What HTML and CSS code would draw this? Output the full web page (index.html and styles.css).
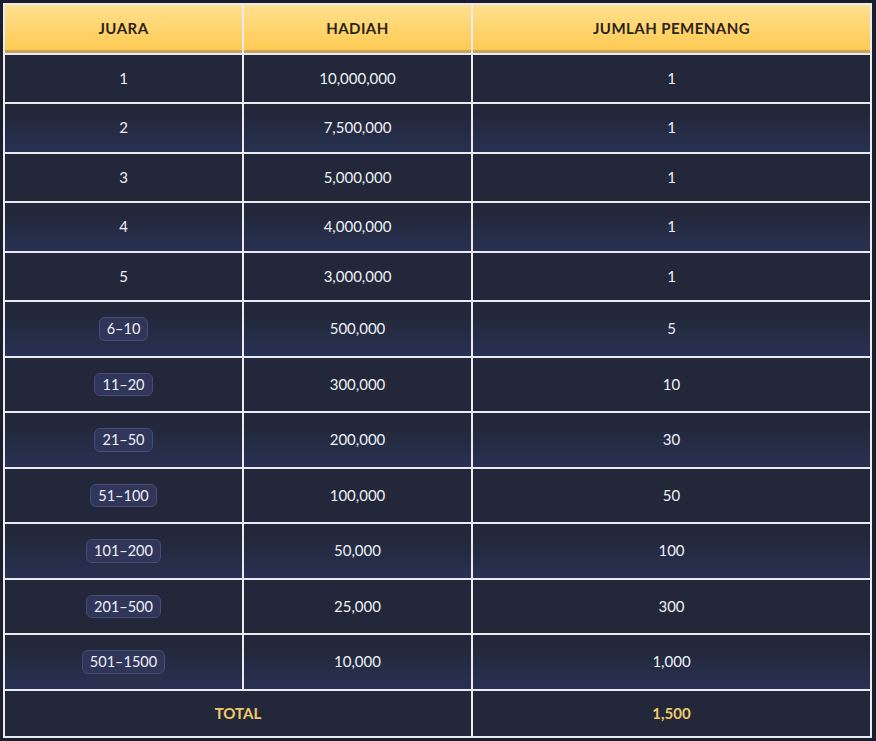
FILE: index.html
```html
<!DOCTYPE html>
<html lang="id">
<head>
    <meta charset="UTF-8">
    <meta name="viewport" content="width=device-width, initial-scale=1.0">
    <title>Hadiah Pemenang</title>
    <link rel="stylesheet" href="styles.css">
</head>
<body>

<table class="prize-table">
    <colgroup>
        <col class="col-rank">
        <col class="col-prize">
        <col>
    </colgroup>
    <thead>
        <tr>
            <th>JUARA</th>
            <th>HADIAH</th>
            <th>JUMLAH PEMENANG</th>
        </tr>
    </thead>
    <tbody>
        <tr><td>1</td><td>10,000,000</td><td>1</td></tr>
        <tr><td>2</td><td>7,500,000</td><td>1</td></tr>
        <tr><td>3</td><td>5,000,000</td><td>1</td></tr>
        <tr><td>4</td><td>4,000,000</td><td>1</td></tr>
        <tr><td>5</td><td>3,000,000</td><td>1</td></tr>
        <!-- rentang juara pakai badge -->
        <tr><td><span class="range">6–10</span></td><td>500,000</td><td>5</td></tr>
        <tr><td><span class="range">11–20</span></td><td>300,000</td><td>10</td></tr>
        <tr><td><span class="range">21–50</span></td><td>200,000</td><td>30</td></tr>
        <tr><td><span class="range">51–100</span></td><td>100,000</td><td>50</td></tr>
        <tr><td><span class="range">101–200</span></td><td>50,000</td><td>100</td></tr>
        <tr><td><span class="range">201–500</span></td><td>25,000</td><td>300</td></tr>
        <tr><td><span class="range">501–1500</span></td><td>10,000</td><td>1,000</td></tr>
    </tbody>
    <tfoot>
        <tr>
            <td colspan="2">TOTAL</td>
            <td>1,500</td>
        </tr>
    </tfoot>
</table>

</body>
</html>
```

FILE: styles.css
```css
body {
    margin: 0;
    padding: 3px 4px 3px 3px;
    background-color: #1b1f2d;
    font-family: Lato, 'Open Sans', sans-serif;
    color: #eef0f6;
}

.prize-table {
    width: 869px;
    border-collapse: collapse;
    border: 2px solid #e9ebf0;
    table-layout: fixed;
}

.col-rank {
    width: 239px;
}

.col-prize {
    width: 229px;
}

.prize-table th,
.prize-table td {
    border: 2px solid #e9ebf0;
    text-align: center;
    font-size: 15px;
    line-height: 17.5px;
}

.prize-table th {
    padding: 15px 8px 15px;
    font-weight: 700;
    letter-spacing: 0.45px;
    color: #2b2416;
    background: linear-gradient(to bottom, #ffe08f, #ffc94f);
    box-shadow: inset 0 -3px 0 #c9a35a;
}

.prize-table td {
    padding: 15px 8px;
    background-color: #222839;
}

.prize-table tbody tr:nth-child(even) td {
    background: linear-gradient(to bottom, #222839 20%, #283152);
}

.range {
    display: inline-block;
    vertical-align: top;
    padding: 3px 7px;
    font-size: 14.5px;
    line-height: 15.5px;
    border-radius: 6px;
    background-color: #30365a;
    border: 1px solid #474d72;
}

.prize-table tfoot td {
    font-weight: 700;
    color: #f2c96a;
    padding: 14px 8px 14px;
}
```
